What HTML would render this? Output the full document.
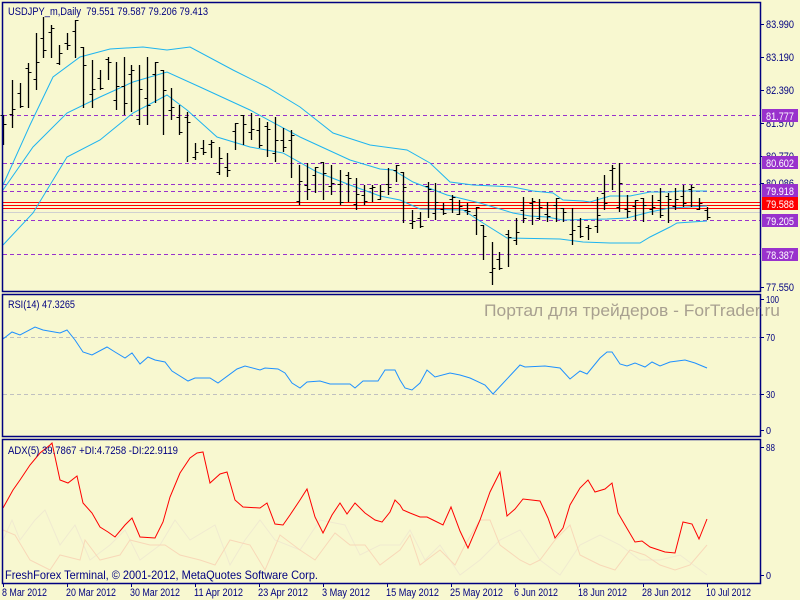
<!DOCTYPE html>
<html><head><meta charset="utf-8">
<style>
html,body{margin:0;padding:0;background:#F8F8D0;}
svg{display:block;font-family:"Liberation Sans",sans-serif;}
</style></head><body>
<svg id="s" width="800" height="600" xmlns="http://www.w3.org/2000/svg">
<rect width="800" height="600" fill="#F8F8D0"/>
<g id="g"></g>
</svg>
<script>
var g=document.getElementById('g'),h='';
function pl(p,c,w,extra){h+='<polyline fill="none" stroke="'+c+'" stroke-width="'+(w||1)+'" '+(extra||'')+' points="'+p.map(function(a){return a.join(',')}).join(' ')+'"/>';}
function ln(x1,y1,x2,y2,c,w,extra){h+='<line x1="'+x1+'" y1="'+y1+'" x2="'+x2+'" y2="'+y2+'" stroke="'+c+'" stroke-width="'+(w||1)+'" '+(extra||'')+'/>';}
function tx(x,y,t,c,s,len,extra){h+='<text x="'+x+'" y="'+y+'" fill="'+c+'" font-size="'+s+'" '+(len?'textLength="'+len+'" lengthAdjust="spacingAndGlyphs" ':'')+(extra||'')+'>'+t+'</text>';}
var dash='stroke-dasharray="4,3"';
[115,163,184,191,220,254].forEach(function(y){ln(3,y+.5,760,y+.5,'#9932CC',1,dash);});
ln(3,212.5,760,212.5,'#D0D0D0',1);
[202,205,208].forEach(function(y){ln(3,y+.5,760,y+.5,'#FF0000',1);});
pl([[3,245],[33,213],[67,157],[100,140],[133,113],[167,95],[187,110],[217,137],[250,147],[283,153],[317,172],[350,185],[380,196],[400,200],[420,209],[463,210],[483,223],[507,238],[560,239],[583,242],[610,243],[640,243],[650,237],[670,227],[677,223],[707,221]],'#1EB4F0');
pl([[3,190],[33,147],[67,113],[100,97],[133,82],[167,72],[200,87],[250,110],[300,137],[350,160],[380,169],[393,170],[413,182],[447,195],[480,203],[513,213],[530,216],[547,217],[563,220],[607,219],[627,218],[650,212],[670,208],[707,206]],'#1EB4F0');
pl([[3,185],[30,125],[53,77],[80,57],[110,49],[143,47],[167,50],[190,47],[233,70],[267,87],[300,107],[333,133],[370,145],[407,150],[430,163],[450,182],[473,185],[513,187],[533,191],[553,193],[563,200],[583,201],[590,202],[610,196],[630,196],[650,192],[670,192],[680,191],[707,191]],'#1EB4F0');
var B=[[3,115,145],[12,80,128],[20,83,108],[28,63,108],[36,33,90],[43,17,58],[51,25,58],[59,45,65],[67,33,50],[75,20,58],[83,47,108],[92,60,108],[100,70,90],[108,57,80],[116,62,110],[124,57,115],[131,65,112],[139,65,125],[147,57,125],[155,62,103],[163,70,135],[171,88,120],[179,105,135],[187,112,162],[195,143,160],[203,140,155],[211,140,158],[219,147,175],[227,153,177],[235,123,150],[243,115,145],[251,113,140],[259,118,148],[267,122,157],[275,117,162],[283,128,152],[291,130,178],[299,165,205],[307,163,200],[315,167,193],[323,162,200],[331,165,195],[340,170,205],[348,172,202],[356,178,210],[364,185,205],[372,185,202],[380,185,200],[388,168,195],[396,165,182],[403,172,223],[412,210,229],[420,212,228],[428,182,218],[435,183,220],[443,203,215],[452,195,213],[459,200,215],[467,203,215],[476,207,235],[483,225,260],[492,242,285],[499,252,270],[508,230,267],[516,218,245],[523,197,223],[532,198,225],[539,199,220],[547,202,222],[556,198,222],[563,208,222],[572,208,245],[580,218,238],[588,225,240],[597,197,233],[604,175,210],[612,165,190],[619,163,212],[627,195,218],[635,200,220],[643,198,222],[652,195,215],[660,188,218],[668,193,223],[675,188,210],[683,185,207],[691,185,207],[699,198,210],[707,207,220]];
B.forEach(function(b,i){var x=b[0]+.5,r=b[2]-b[1];var o=Math.round(b[1]+r*((i*37)%10)/10)+.5,c=Math.round(b[1]+r*((i*53+3)%10)/10)+.5;if(i==B.length-1){o=210.5;c=217.5;}
ln(x,b[1],x,b[2],'#000',1.3);ln(x-3,o,x,o,'#000',1);ln(x,c,x+3,c,'#000',1);});
ln(3,337.5,760,337.5,'#C0C0C0',1,dash);ln(3,394.5,760,394.5,'#C0C0C0',1,dash);
pl([[3,339],[12,332],[20,335],[35,327],[43,330],[60,333],[67,330],[75,340],[83,352],[92,355],[107,347],[115,352],[125,358],[132,353],[140,364],[148,357],[155,360],[165,362],[172,371],[188,381],[195,378],[210,378],[218,383],[237,369],[245,366],[260,370],[265,368],[278,369],[285,373],[292,383],[300,388],[307,382],[320,381],[330,384],[340,384],[350,384],[355,388],[363,381],[378,381],[385,370],[395,370],[400,380],[405,388],[412,390],[420,383],[427,370],[435,377],[450,373],[460,375],[470,378],[485,385],[493,394],[520,365],[525,367],[545,366],[560,368],[570,379],[580,371],[587,374],[600,358],[607,352],[612,352],[620,364],[627,366],[635,363],[645,367],[652,362],[660,366],[670,362],[685,360],[695,363],[707,368]],'#1E90FF');
pl([[3,540],[12,520],[20,540],[35,520],[45,510],[60,545],[75,525],[90,560],[110,545],[125,530],[140,560],[160,545],[175,520],[190,540],[215,525],[230,565],[245,540],[260,520],[275,540],[300,550],[320,520],[345,525],[360,555],[380,545],[400,545],[410,530],[425,560],[440,545],[460,575],[480,560],[500,540],[520,530],[540,560],[560,575],[580,545],[600,535],[620,545],[640,560],[660,560],[680,555],[707,575]],'#F0EAD0');
pl([[3,530],[15,535],[30,560],[50,570],[60,555],[80,560],[85,540],[100,560],[120,555],[130,540],[150,545],[165,545],[180,555],[200,560],[215,565],[230,540],[250,545],[265,570],[280,535],[300,550],[315,560],[335,533],[350,545],[365,545],[380,565],[400,550],[410,535],[420,565],[440,550],[455,565],[465,545],[480,520],[490,520],[500,545],[520,560],[530,565],[540,560],[555,540],[570,525],[580,555],[600,565],[615,570],[630,550],[645,555],[660,565],[675,570],[690,565],[707,545]],'#F8D8B8');
pl([[3,508],[13,490],[20,480],[30,465],[40,453],[50,445],[52,443],[60,480],[68,483],[77,476],[83,503],[92,513],[100,527],[108,532],[115,537],[125,525],[132,518],[140,537],[155,538],[163,522],[170,497],[180,473],[190,458],[197,453],[203,452],[210,483],[220,474],[227,472],[235,500],[243,507],[260,508],[267,503],[275,524],[283,525],[290,515],[300,500],[307,489],[315,517],[323,533],[332,515],[340,503],[347,514],[355,503],[365,513],[375,520],[382,522],[390,512],[395,500],[400,505],[403,510],[410,513],[420,517],[427,517],[433,520],[443,525],[451,507],[460,531],[468,548],[480,520],[490,492],[500,472],[507,516],[515,509],[523,499],[540,501],[548,518],[555,538],[563,528],[570,505],[580,488],[588,480],[595,492],[605,489],[612,483],[618,513],[625,525],[635,542],[642,541],[650,547],[665,552],[675,553],[683,522],[692,524],[699,539],[707,519]],'#FF0000');
[[2,2,291],[2,294,436],[2,439,583]].forEach(function(f){h+='<rect x="'+(f[0]+.5)+'" y="'+(f[1]+.5)+'" width="758" height="'+(f[2]-f[1])+'" fill="none" stroke="#000080" stroke-width="1.5"/>';});
var nv='#000080';
[[24,'83.990'],[57,'83.190'],[90,'82.390'],[123,'81.570'],[156,'80.770'],[183,'80.086'],[287,'77.550']].forEach(function(a){ln(760,a[0]+.5,764,a[0]+.5,nv,1);tx(766,a[0]+4,a[1],nv,11,28);});
[[115,'81.777','#9932CC'],[162,'80.602','#9932CC'],[190,'79.918','#9932CC'],[203,'79.588','#FF0000'],[220,'79.205','#9932CC'],[254,'78.387','#9932CC']].forEach(function(a){h+='<rect x="762" y="'+(a[0]-6)+'" width="36" height="13" fill="'+a[2]+'"/>';tx(766,a[0]+5,a[1],'#fff',11,28);});
[[299,'100',13],[337,'70',9],[394,'30',9],[430,'0',5],[447,'88',9],[575,'0',5]].forEach(function(a){ln(760,a[0]+.5,764,a[0]+.5,nv,1);tx(766,a[0]+4,a[1],nv,10,a[2]);});
[[3,'8 Mar 2012',45],[67,'20 Mar 2012',50],[131,'30 Mar 2012',50],[195,'11 Apr 2012',49],[259,'23 Apr 2012',50],[323,'3 May 2012',48],[387,'15 May 2012',53],[451,'25 May 2012',53],[515,'6 Jun 2012',44],[579,'18 Jun 2012',49],[643,'28 Jun 2012',49],[707,'10 Jul 2012',45]].forEach(function(a){ln(a[0]+.5,583,a[0]+.5,587,nv,1);tx(a[0]-1,596,a[1],nv,11,a[2]);});
tx(8,15,'USDJPY_m,Daily  79.551 79.587 79.206 79.413',nv,11,200,'xml:space="preserve"');
tx(8,308,'RSI(14) 47.3265',nv,11,67);
tx(8,454,'ADX(5) 39.7867 +DI:4.7258 -DI:22.9119',nv,11,170);
tx(5,579,'FreshForex Terminal, © 2001-2012, MetaQuotes Software Corp.',nv,12,313);
tx(484,316,'Портал для трейдеров - ForTrader.ru','#A8A090',17,296);
g.innerHTML=h;
</script>
</body></html>
